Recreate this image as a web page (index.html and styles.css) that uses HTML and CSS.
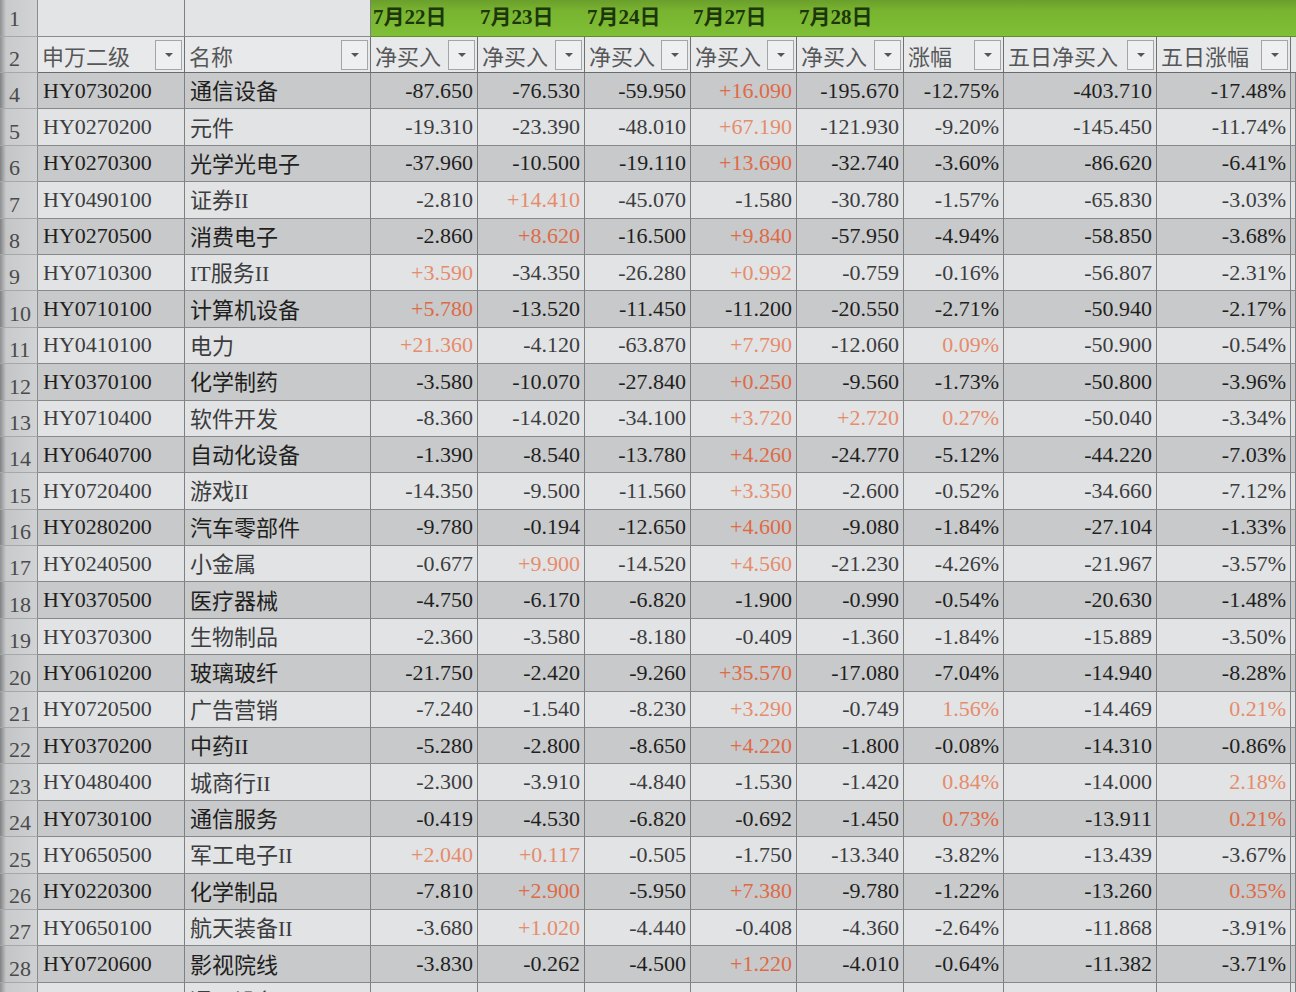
FILE: index.html
```html
<!DOCTYPE html>
<html lang="zh-CN">
<head>
<meta charset="utf-8">
<title>申万二级行业 净买入</title>
<link rel="stylesheet" href="styles.css">
</head>
<body>
<div class="sheet">
  <div class="row r1">
    <div class="rn">1</div><div class="cell"></div><div class="cell"></div>
    <div class="cell g">7月22日</div><div class="cell g">7月23日</div><div class="cell g">7月24日</div><div class="cell g">7月27日</div><div class="cell g">7月28日</div>
    <div class="cell g"></div><div class="cell g"></div><div class="cell g"></div><div class="cell g"></div>
  </div>
  <div class="row r2">
    <div class="rn">2</div>
    <div class="cell h"><span>申万二级</span><i class="dd"></i></div>
    <div class="cell h"><span>名称</span><i class="dd"></i></div>
    <div class="cell h"><span>净买入</span><i class="dd"></i></div>
    <div class="cell h"><span>净买入</span><i class="dd"></i></div>
    <div class="cell h"><span>净买入</span><i class="dd"></i></div>
    <div class="cell h"><span>净买入</span><i class="dd"></i></div>
    <div class="cell h"><span>净买入</span><i class="dd"></i></div>
    <div class="cell h"><span>涨幅</span><i class="dd"></i></div>
    <div class="cell h"><span>五日净买入</span><i class="dd"></i></div>
    <div class="cell h"><span>五日涨幅</span><i class="dd"></i></div>
    <div class="cell h"></div>
  </div>

  <div class="row dk"><div class="rn">4</div><div class="cell code">HY0730200</div><div class="cell name">通信设备</div><div class="cell n">-87.650</div><div class="cell n">-76.530</div><div class="cell n">-59.950</div><div class="cell n p">+16.090</div><div class="cell n">-195.670</div><div class="cell n">-12.75%</div><div class="cell n">-403.710</div><div class="cell n">-17.48%</div><div class="cell"></div></div>
  <div class="row lt"><div class="rn">5</div><div class="cell code">HY0270200</div><div class="cell name">元件</div><div class="cell n">-19.310</div><div class="cell n">-23.390</div><div class="cell n">-48.010</div><div class="cell n p">+67.190</div><div class="cell n">-121.930</div><div class="cell n">-9.20%</div><div class="cell n">-145.450</div><div class="cell n">-11.74%</div><div class="cell"></div></div>
  <div class="row dk"><div class="rn">6</div><div class="cell code">HY0270300</div><div class="cell name">光学光电子</div><div class="cell n">-37.960</div><div class="cell n">-10.500</div><div class="cell n">-19.110</div><div class="cell n p">+13.690</div><div class="cell n">-32.740</div><div class="cell n">-3.60%</div><div class="cell n">-86.620</div><div class="cell n">-6.41%</div><div class="cell"></div></div>
  <div class="row lt"><div class="rn">7</div><div class="cell code">HY0490100</div><div class="cell name">证券II</div><div class="cell n">-2.810</div><div class="cell n p">+14.410</div><div class="cell n">-45.070</div><div class="cell n">-1.580</div><div class="cell n">-30.780</div><div class="cell n">-1.57%</div><div class="cell n">-65.830</div><div class="cell n">-3.03%</div><div class="cell"></div></div>
  <div class="row dk"><div class="rn">8</div><div class="cell code">HY0270500</div><div class="cell name">消费电子</div><div class="cell n">-2.860</div><div class="cell n p">+8.620</div><div class="cell n">-16.500</div><div class="cell n p">+9.840</div><div class="cell n">-57.950</div><div class="cell n">-4.94%</div><div class="cell n">-58.850</div><div class="cell n">-3.68%</div><div class="cell"></div></div>
  <div class="row lt"><div class="rn">9</div><div class="cell code">HY0710300</div><div class="cell name">IT服务II</div><div class="cell n p">+3.590</div><div class="cell n">-34.350</div><div class="cell n">-26.280</div><div class="cell n p">+0.992</div><div class="cell n">-0.759</div><div class="cell n">-0.16%</div><div class="cell n">-56.807</div><div class="cell n">-2.31%</div><div class="cell"></div></div>
  <div class="row dk"><div class="rn">10</div><div class="cell code">HY0710100</div><div class="cell name">计算机设备</div><div class="cell n p">+5.780</div><div class="cell n">-13.520</div><div class="cell n">-11.450</div><div class="cell n">-11.200</div><div class="cell n">-20.550</div><div class="cell n">-2.71%</div><div class="cell n">-50.940</div><div class="cell n">-2.17%</div><div class="cell"></div></div>
  <div class="row lt"><div class="rn">11</div><div class="cell code">HY0410100</div><div class="cell name">电力</div><div class="cell n p">+21.360</div><div class="cell n">-4.120</div><div class="cell n">-63.870</div><div class="cell n p">+7.790</div><div class="cell n">-12.060</div><div class="cell n p">0.09%</div><div class="cell n">-50.900</div><div class="cell n">-0.54%</div><div class="cell"></div></div>
  <div class="row dk"><div class="rn">12</div><div class="cell code">HY0370100</div><div class="cell name">化学制药</div><div class="cell n">-3.580</div><div class="cell n">-10.070</div><div class="cell n">-27.840</div><div class="cell n p">+0.250</div><div class="cell n">-9.560</div><div class="cell n">-1.73%</div><div class="cell n">-50.800</div><div class="cell n">-3.96%</div><div class="cell"></div></div>
  <div class="row lt"><div class="rn">13</div><div class="cell code">HY0710400</div><div class="cell name">软件开发</div><div class="cell n">-8.360</div><div class="cell n">-14.020</div><div class="cell n">-34.100</div><div class="cell n p">+3.720</div><div class="cell n p">+2.720</div><div class="cell n p">0.27%</div><div class="cell n">-50.040</div><div class="cell n">-3.34%</div><div class="cell"></div></div>
  <div class="row dk"><div class="rn">14</div><div class="cell code">HY0640700</div><div class="cell name">自动化设备</div><div class="cell n">-1.390</div><div class="cell n">-8.540</div><div class="cell n">-13.780</div><div class="cell n p">+4.260</div><div class="cell n">-24.770</div><div class="cell n">-5.12%</div><div class="cell n">-44.220</div><div class="cell n">-7.03%</div><div class="cell"></div></div>
  <div class="row lt"><div class="rn">15</div><div class="cell code">HY0720400</div><div class="cell name">游戏II</div><div class="cell n">-14.350</div><div class="cell n">-9.500</div><div class="cell n">-11.560</div><div class="cell n p">+3.350</div><div class="cell n">-2.600</div><div class="cell n">-0.52%</div><div class="cell n">-34.660</div><div class="cell n">-7.12%</div><div class="cell"></div></div>
  <div class="row dk"><div class="rn">16</div><div class="cell code">HY0280200</div><div class="cell name">汽车零部件</div><div class="cell n">-9.780</div><div class="cell n">-0.194</div><div class="cell n">-12.650</div><div class="cell n p">+4.600</div><div class="cell n">-9.080</div><div class="cell n">-1.84%</div><div class="cell n">-27.104</div><div class="cell n">-1.33%</div><div class="cell"></div></div>
  <div class="row lt"><div class="rn">17</div><div class="cell code">HY0240500</div><div class="cell name">小金属</div><div class="cell n">-0.677</div><div class="cell n p">+9.900</div><div class="cell n">-14.520</div><div class="cell n p">+4.560</div><div class="cell n">-21.230</div><div class="cell n">-4.26%</div><div class="cell n">-21.967</div><div class="cell n">-3.57%</div><div class="cell"></div></div>
  <div class="row dk"><div class="rn">18</div><div class="cell code">HY0370500</div><div class="cell name">医疗器械</div><div class="cell n">-4.750</div><div class="cell n">-6.170</div><div class="cell n">-6.820</div><div class="cell n">-1.900</div><div class="cell n">-0.990</div><div class="cell n">-0.54%</div><div class="cell n">-20.630</div><div class="cell n">-1.48%</div><div class="cell"></div></div>
  <div class="row lt"><div class="rn">19</div><div class="cell code">HY0370300</div><div class="cell name">生物制品</div><div class="cell n">-2.360</div><div class="cell n">-3.580</div><div class="cell n">-8.180</div><div class="cell n">-0.409</div><div class="cell n">-1.360</div><div class="cell n">-1.84%</div><div class="cell n">-15.889</div><div class="cell n">-3.50%</div><div class="cell"></div></div>
  <div class="row dk"><div class="rn">20</div><div class="cell code">HY0610200</div><div class="cell name">玻璃玻纤</div><div class="cell n">-21.750</div><div class="cell n">-2.420</div><div class="cell n">-9.260</div><div class="cell n p">+35.570</div><div class="cell n">-17.080</div><div class="cell n">-7.04%</div><div class="cell n">-14.940</div><div class="cell n">-8.28%</div><div class="cell"></div></div>
  <div class="row lt"><div class="rn">21</div><div class="cell code">HY0720500</div><div class="cell name">广告营销</div><div class="cell n">-7.240</div><div class="cell n">-1.540</div><div class="cell n">-8.230</div><div class="cell n p">+3.290</div><div class="cell n">-0.749</div><div class="cell n p">1.56%</div><div class="cell n">-14.469</div><div class="cell n p">0.21%</div><div class="cell"></div></div>
  <div class="row dk"><div class="rn">22</div><div class="cell code">HY0370200</div><div class="cell name">中药II</div><div class="cell n">-5.280</div><div class="cell n">-2.800</div><div class="cell n">-8.650</div><div class="cell n p">+4.220</div><div class="cell n">-1.800</div><div class="cell n">-0.08%</div><div class="cell n">-14.310</div><div class="cell n">-0.86%</div><div class="cell"></div></div>
  <div class="row lt"><div class="rn">23</div><div class="cell code">HY0480400</div><div class="cell name">城商行II</div><div class="cell n">-2.300</div><div class="cell n">-3.910</div><div class="cell n">-4.840</div><div class="cell n">-1.530</div><div class="cell n">-1.420</div><div class="cell n p">0.84%</div><div class="cell n">-14.000</div><div class="cell n p">2.18%</div><div class="cell"></div></div>
  <div class="row dk"><div class="rn">24</div><div class="cell code">HY0730100</div><div class="cell name">通信服务</div><div class="cell n">-0.419</div><div class="cell n">-4.530</div><div class="cell n">-6.820</div><div class="cell n">-0.692</div><div class="cell n">-1.450</div><div class="cell n p">0.73%</div><div class="cell n">-13.911</div><div class="cell n p">0.21%</div><div class="cell"></div></div>
  <div class="row lt"><div class="rn">25</div><div class="cell code">HY0650500</div><div class="cell name">军工电子II</div><div class="cell n p">+2.040</div><div class="cell n p">+0.117</div><div class="cell n">-0.505</div><div class="cell n">-1.750</div><div class="cell n">-13.340</div><div class="cell n">-3.82%</div><div class="cell n">-13.439</div><div class="cell n">-3.67%</div><div class="cell"></div></div>
  <div class="row dk"><div class="rn">26</div><div class="cell code">HY0220300</div><div class="cell name">化学制品</div><div class="cell n">-7.810</div><div class="cell n p">+2.900</div><div class="cell n">-5.950</div><div class="cell n p">+7.380</div><div class="cell n">-9.780</div><div class="cell n">-1.22%</div><div class="cell n">-13.260</div><div class="cell n p">0.35%</div><div class="cell"></div></div>
  <div class="row lt"><div class="rn">27</div><div class="cell code">HY0650100</div><div class="cell name">航天装备II</div><div class="cell n">-3.680</div><div class="cell n p">+1.020</div><div class="cell n">-4.440</div><div class="cell n">-0.408</div><div class="cell n">-4.360</div><div class="cell n">-2.64%</div><div class="cell n">-11.868</div><div class="cell n">-3.91%</div><div class="cell"></div></div>
  <div class="row dk"><div class="rn">28</div><div class="cell code">HY0720600</div><div class="cell name">影视院线</div><div class="cell n">-3.830</div><div class="cell n">-0.262</div><div class="cell n">-4.500</div><div class="cell n p">+1.220</div><div class="cell n">-4.010</div><div class="cell n">-0.64%</div><div class="cell n">-11.382</div><div class="cell n">-3.71%</div><div class="cell"></div></div>
  <div class="row lt"><div class="rn">29</div><div class="cell code">HY0630300</div><div class="cell name">通用设备</div><div class="cell n">-1.020</div><div class="cell n">-1.650</div><div class="cell n">-1.651</div><div class="cell n p">+4.130</div><div class="cell n">-5.300</div><div class="cell n">-1.51%</div><div class="cell n">-10.410</div><div class="cell n">-2.00%</div><div class="cell"></div></div>
</div>
</body>
</html>
```

FILE: styles.css
```css
html, body {
  margin: 0;
  padding: 0;
  background: #2a2a2a;
  overflow: hidden;
}

body {
  width: 1296px;
  height: 992px;
  font-family: "Liberation Serif", "Noto Sans CJK SC", serif;
  font-size: 22px;
}

.sheet {
  display: flex;
  flex-direction: column;
  width: 1296px;
}

.row {
  display: grid;
  grid-template-columns: 38px 147px 186px 107px 107px 106px 106px 107px 100px 153px 134px 1fr;
  height: 36.4px;
  box-sizing: border-box;
}

.r1 { height: 37px; }
.r2 { height: 36px; }

.cell, .rn {
  box-sizing: border-box;
  border-right: 1px solid #7e8082;
  border-bottom: 1px solid #86888a;
  display: flex;
  align-items: center;
  white-space: nowrap;
  overflow: hidden;
  min-width: 0;
}

.rn {
  background: linear-gradient(to right, #8e8f91 0, #c9cacc 6px, #d2d3d4 100%);
  color: #4a4a4a;
  padding-left: 9px;
  align-items: flex-end;
  padding-bottom: 2px;
  border-right: 1px solid #8a8b8d;
  border-bottom: 1px solid #a6a7a9;
  font-size: 22px;
  line-height: 1;
}

/* row 1 */
.r1 .cell {
  background: #e3e4e5;
  border-bottom: 1px solid #8a8b8d;
}
.r1 .cell.g {
  background: linear-gradient(#6a9f2c, #78b42f 30%, #80bf38);
  border-right: none;
  border-bottom: 1px solid #5f8f2a;
  color: #1d360b;
  font-size: 21px;
  font-weight: bold;
  padding-left: 2px;
  align-items: flex-end;
  padding-bottom: 6px;
}
.r1 .rn { padding-bottom: 6px; }

/* row 2: header with filter buttons */
.r2 .cell.h {
  background: #e8e9ea;
  color: #565759;
  justify-content: space-between;
  padding: 2px 2px 2px 4px;
  font-size: 22px;
  border-right: 1px solid #6f7072;
  border-bottom: 1px solid #6a6b6d;
}

.dd {
  flex: none;
  width: 27px;
  height: 30px;
  box-sizing: border-box;
  border: 1px solid #a4a5a7;
  background: #eeeff0;
  display: flex;
  align-items: center;
  justify-content: center;
}
.dd::after {
  content: "";
  width: 0;
  height: 0;
  border-left: 4px solid transparent;
  border-right: 4px solid transparent;
  border-top: 4px solid #555658;
}

/* data rows */
.dk .cell { background: #c8c9cb; color: #1f1f20; }
.lt .cell { background: #e2e3e4; color: #3c3d3f; }

.dk .rn { background: linear-gradient(to right, #7f8082 0, #c4c5c7 6px, #cfd0d1 100%); }

.code {
  padding-left: 5px;
  font-size: 22px;
}
.name {
  padding-left: 5px;
  padding-bottom: 3px;
  font-size: 22px;
}
.n {
  justify-content: flex-end;
  padding-right: 4px;
  font-size: 22px;
}
.dk .n.p { color: #df6a45; }
.lt .n.p { color: #e58c6c; }
```
